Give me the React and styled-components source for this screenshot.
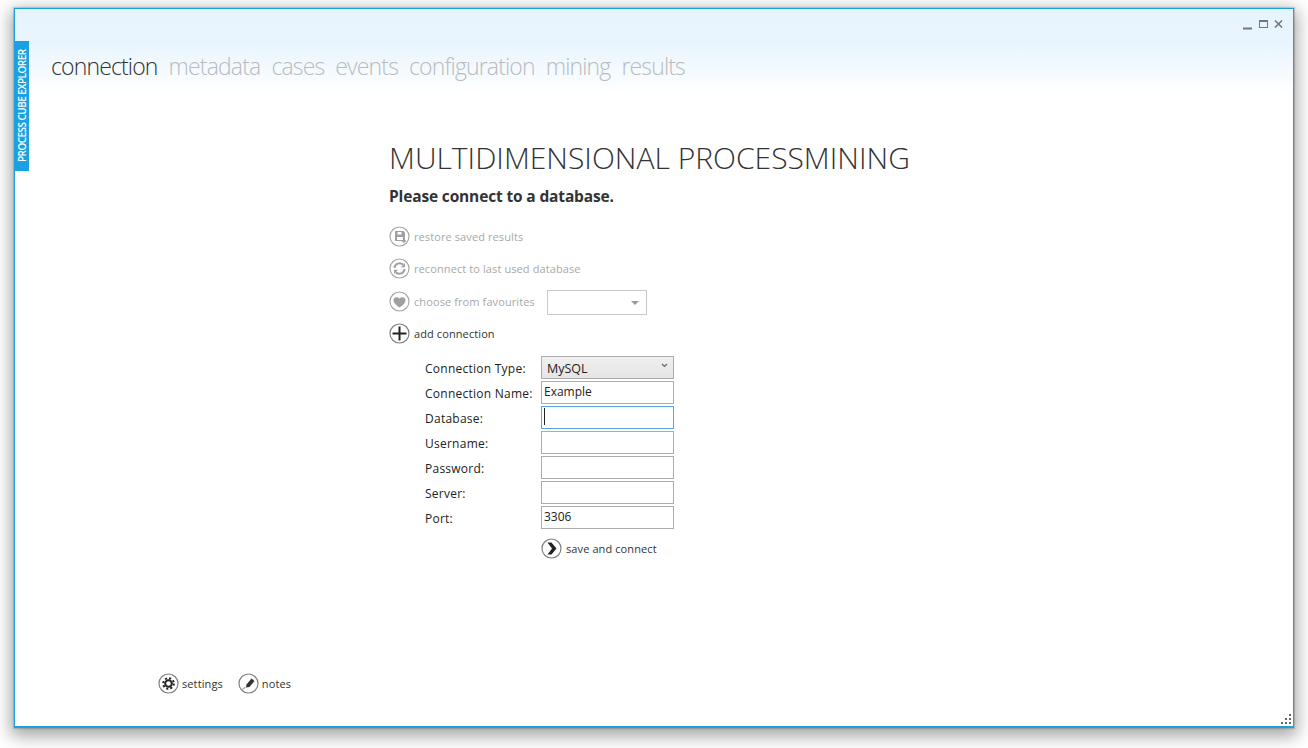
import React from "react";
import styled, { createGlobalStyle } from "styled-components";

const Global = createGlobalStyle`
  html, body { margin: 0; padding: 0; background: #fff; }
  body { font-family: "Open Sans", "Noto Sans", "Liberation Sans", sans-serif; color: #222; }
  #root { width: 1308px; height: 748px; overflow: hidden; padding: 8px 14px 20px; box-sizing: border-box; }
`;

const Window = styled.div`
  position: relative;
  width: 1280px;
  height: 720px;
  box-sizing: border-box;
  border: 1px solid #1ba1e2;
  border-bottom-width: 2px;
  background: linear-gradient(to bottom, #e6f4fd 0, #e9f5fd 35px, #fff 85px);
  box-shadow: 0 0 1px 1px rgba(0,0,0,.14), 0 5px 16px 3px rgba(0,0,0,.36);
  display: flex;
  flex-direction: column;
`;

const TitleBar = styled.div`
  height: 32px;
  display: flex;
  justify-content: flex-end;
  align-items: flex-start;
  padding: 10px 9px 0 0;
  box-sizing: border-box;
`;

const SideTab = styled.div`
  position: absolute;
  left: 0;
  top: 32px;
  width: 14px;
  height: 130px;
  background: #1ba1e2;
  color: #fff;
  display: flex;
  align-items: center;
  justify-content: center;
  writing-mode: vertical-rl;
  transform: rotate(180deg);
  font-size: 10px;
  font-weight: 600;
  letter-spacing: -0.55px;
  white-space: nowrap;
`;

const Nav = styled.nav`
  display: flex;
  gap: 11px;
  padding: 7px 0 0 36px;
  height: 48px;
  box-sizing: border-box;
`;

const NavItem = styled.span`
  font-size: 23px;
  line-height: 36px;
  font-weight: 300;
  letter-spacing: -0.85px;
  color: ${p => (p.$active ? "#333" : "#b8bcc0")};
`;

const Main = styled.main`
  flex: 1;
  padding: 49px 0 0 374px;
  display: flex;
  flex-direction: column;
`;

const Title = styled.h1`
  margin: 0;
  font-size: 30px;
  line-height: 40px;
  font-weight: 300;
  color: #333;
  white-space: nowrap;
`;

const Subtitle = styled.h2`
  margin: 8px 0 0;
  font-size: 15.5px;
  line-height: 20px;
  font-weight: 700;
  letter-spacing: -0.15px;
  color: #333;
`;

const Actions = styled.div`
  margin-top: 14px;
  display: flex;
  flex-direction: column;
`;

const Action = styled.div`
  height: 32px;
  display: flex;
  align-items: center;
  gap: 4px;
  font-size: 11px;
  letter-spacing: 0.1px;
  color: ${p => (p.$disabled ? "#a8a8a8" : "#333")};
  white-space: nowrap;
`;

const FavouritesRow = styled(Action)`
  margin-top: 1px;
`;

const Ring = styled.span`
  width: 21px;
  height: 21px;
  flex: none;
  color: ${p => (p.$disabled ? "#a0a0a0" : "#333")};
  display: inline-flex;
  svg { display: block; }
`;

const Combo = styled.div`
  width: 100px;
  height: 25px;
  margin: 2px 0 0 8px;
  border: 1px solid #c8c8c8;
  box-sizing: border-box;
  background: #fff;
  display: flex;
  align-items: center;
  justify-content: flex-end;
  padding-right: 7px;
  &::after {
    content: "";
    border-left: 4px solid transparent;
    border-right: 4px solid transparent;
    border-top: 4px solid #999;
    margin-top: 1px;
  }
`;

const Form = styled.div`
  margin: 7px 0 0 36px;
  display: grid;
  grid-template-columns: 116px 133px;
  grid-auto-rows: 23px;
  row-gap: 2px;
  align-items: stretch;
`;

const Label = styled.label`
  font-size: 12px;
  line-height: 25px;
  letter-spacing: 0.25px;
  color: #222;
  white-space: nowrap;
`;

const Field = styled.div`
  box-sizing: border-box;
  border: 1px solid ${p => (p.$focus ? "#5aa5dc" : "#ababab")};
  background: #fff;
  font-size: 12px;
  line-height: 20px;
  padding: 0 2px;
  color: #222;
  display: flex;
  align-items: flex-start;
`;

const Caret = styled.span`
  width: 1px;
  height: 17px;
  margin-top: 1px;
  background: #222;
`;

const SelectBox = styled.div`
  box-sizing: border-box;
  border: 1px solid #acacac;
  background: linear-gradient(to bottom, #f0f0f0, #e5e5e5);
  font-size: 12.5px;
  line-height: 23px;
  padding: 0 5px;
  color: #222;
  display: flex;
  justify-content: space-between;
  align-items: flex-start;
  svg { margin-top: 6px; }
`;

const Save = styled(Action)`
  margin: 7px 0 0 152px;
  height: 24px;
`;

const Footer = styled.footer`
  height: 53px;
  padding-left: 143px;
  display: flex;
  gap: 15px;
  box-sizing: border-box;
`;

const FootItem = styled(Action)`
  height: 21px;
  gap: 3px;
`;

const Grip = styled.svg`
  position: absolute;
  right: 1px;
  bottom: 1px;
`;

const CircleIcon = ({ children, disabled }) => (
  <Ring $disabled={disabled}>
    <svg width="21" height="21" viewBox="0 0 21 21">
      <circle cx="10.5" cy="10.5" r="9.5" fill="#fff" stroke={disabled ? "#a8a8a8" : "#808080"} strokeWidth="1.2" />
      {children}
    </svg>
  </Ring>
);

const fields = [
  ["Connection Name:", "Example"],
  ["Database:", null, true],
  ["Username:", ""],
  ["Password:", ""],
  ["Server:", ""],
  ["Port:", "3306"],
];

const navItems = ["connection", "metadata", "cases", "events", "configuration", "mining", "results"];

export default function App() {
  return (
    <>
      <Global />
      <Window>
        <TitleBar>
          <svg width="41" height="12" viewBox="0 0 41 12" fill="none" stroke="#777">
            <path d="M0 9.500h9" strokeWidth="2" />
            <rect x="16.500" y="1.500" width="8" height="7" strokeWidth="1" />
            <path d="M16.500 2h8" strokeWidth="2" />
            <path d="M32 1.500l7 7M39 1.500l-7 7" strokeWidth="1.700" />
          </svg>
        </TitleBar>
        <SideTab>PROCESS CUBE EXPLORER</SideTab>
        <Nav>
          {navItems.map((n, i) => (
            <NavItem key={n} $active={i === 0}>{n}</NavItem>
          ))}
        </Nav>
        <Main>
          <Title>MULTIDIMENSIONAL PROCESSMINING</Title>
          <Subtitle>Please connect to a database.</Subtitle>
          <Actions>
            <Action $disabled>
              <CircleIcon disabled>
                <path d="M6 5h8.500L16 6.500V15H6z" fill="currentColor" />
                <path d="M8.500 6h4v2.500h-4zM8 11h6v3H8z" fill="#fff" />
                <path d="M12.500 15h4.500M15 13v4" stroke="currentColor" strokeWidth="1.300" />
              </CircleIcon>
              restore saved results
            </Action>
            <Action $disabled>
              <CircleIcon disabled>
                <path d="M5.500 10a5 5 0 0 1 8.600-3.200M15.500 11a5 5 0 0 1-8.600 3.200" fill="none" stroke="currentColor" strokeWidth="2" />
                <path d="M16 5v4.200h-4.200zM5 16v-4.200h4.200z" fill="currentColor" />
              </CircleIcon>
              reconnect to last used database
            </Action>
            <FavouritesRow $disabled>
              <CircleIcon disabled>
                <path d="M10.500 16.500c-3-2.200-6-4.400-6-7.300 0-3 3.900-4.200 6-1.600 2.100-2.600 6-1.400 6 1.600 0 2.900-3 5.100-6 7.300z" fill="currentColor" />
              </CircleIcon>
              choose from favourites
              <Combo />
            </FavouritesRow>
            <Action>
              <CircleIcon>
                <path d="M3.500 10.500h14M10.500 3.500v14" stroke="#222" strokeWidth="2" />
              </CircleIcon>
              add connection
            </Action>
          </Actions>
          <Form>
            <Label>Connection Type:</Label>
            <SelectBox>
              MySQL
              <svg width="7" height="5" viewBox="0 0 7 5" fill="none" stroke="#666" strokeWidth="1.200">
                <path d="M1 1l2.500 2.500L6 1" />
              </svg>
            </SelectBox>
            {fields.map(([label, value, focus]) => (
              <React.Fragment key={label}>
                <Label>{label}</Label>
                <Field $focus={focus}>{focus ? <Caret /> : value}</Field>
              </React.Fragment>
            ))}
          </Form>
          <Save>
            <CircleIcon>
              <path d="M6.500 4.500h4l5 6-5 6h-4l4.500-6z" fill="#222" />
            </CircleIcon>
            save and connect
          </Save>
        </Main>
        <Footer>
          <FootItem>
            <CircleIcon>
              <circle cx="10.500" cy="10.500" r="3.300" fill="none" stroke="#222" strokeWidth="2" />
              <circle cx="10.500" cy="10.500" r="5.300" fill="none" stroke="#222" strokeWidth="2" strokeDasharray="2.080 2.080" />
            </CircleIcon>
            settings
          </FootItem>
          <FootItem>
            <CircleIcon>
              <path d="M8.500 11.500l5-6 3 2.500-5 6-3.500.5z" fill="#333" />
              <path d="M4.500 16.500l2.800-2.500" stroke="#aaa" strokeWidth="1.500" />
            </CircleIcon>
            notes
          </FootItem>
        </Footer>
        <Grip width="12" height="12" viewBox="0 0 12 12" fill="#666">
          <rect x="9" y="1" width="2" height="2" />
          <rect x="5" y="5" width="2" height="2" />
          <rect x="9" y="5" width="2" height="2" />
          <rect x="1" y="9" width="2" height="2" />
          <rect x="5" y="9" width="2" height="2" />
          <rect x="9" y="9" width="2" height="2" />
        </Grip>
      </Window>
    </>
  );
}
